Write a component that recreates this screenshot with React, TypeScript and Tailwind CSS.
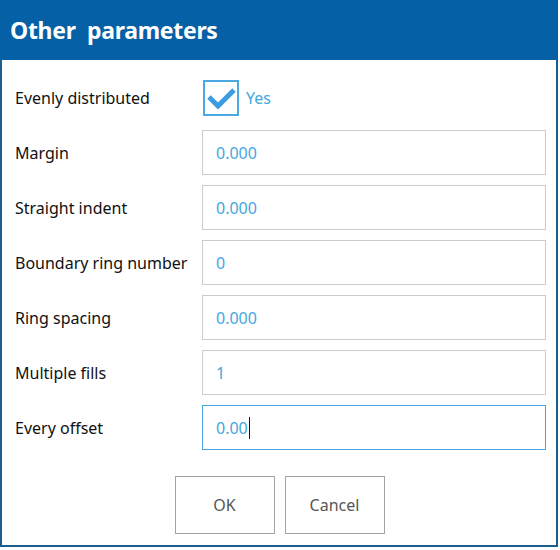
import React from "react";

const rows: { label: string; value: string; focus?: boolean }[] = [
  { label: "Margin", value: "0.000" },
  { label: "Straight indent", value: "0.000" },
  { label: "Boundary ring number", value: "0" },
  { label: "Ring spacing", value: "0.000" },
  { label: "Multiple fills", value: "1" },
  { label: "Every offset", value: "0.00", focus: true },
];

export default function App() {
  return (
    <div
      className="w-[560px] h-[550px] bg-white relative overflow-hidden"
      style={{ fontFamily: '"Noto Sans", "Open Sans", sans-serif' }}
    >
      <div className="w-[558px] h-[547px] border-2 border-t-0 border-[#1b5f8f] bg-white flex flex-col">
        <div className="h-[60px] bg-[#0660a6] flex items-center pl-[10px] -mx-[2px]">
          <span className="text-white text-[23px] font-bold whitespace-pre leading-none tracking-[-0.3px]">
            Other  parameters
          </span>
        </div>
        <div className="flex flex-col gap-[10px] pt-[15px] pl-[13px]">
          <div className="flex items-center h-[45px]">
            <div className="w-[188px] text-[16px] text-[#111]">Evenly distributed</div>
            <div className="w-[36px] h-[36px] border-2 border-[#4aa8e2] flex items-center justify-center">
              <svg width="36" height="36" viewBox="0 0 36 36" className="-m-[2px]">
                <path d="M6 17 L15 26 L31 10" fill="none" stroke="#3a9de0" strokeWidth="5" strokeLinecap="butt" strokeLinejoin="miter" />
              </svg>
            </div>
            <span className="ml-[7px] text-[16px] text-[#45a6e0]">Yes</span>
          </div>
          {rows.map((r) => (
            <div key={r.label} className="flex items-center h-[45px]">
              <div className="w-[187px] text-[16px] text-[#111]">{r.label}</div>
              <div
                className={`w-[344px] h-[45px] border flex items-center pl-[13px] bg-white ${
                  r.focus ? "border-[#45a6e0]" : "border-[#cccccc]"
                }`}
              >
                <span className="text-[16px] text-[#45a6e0]">{r.value}</span>
                {r.focus && <span className="w-px h-[22px] bg-[#111] ml-[1px]" />}
              </div>
            </div>
          ))}
        </div>
        <div className="flex justify-center gap-[10px] mt-[26px] pl-[1px]">
          <button className="w-[100px] h-[58px] border border-[#a3a3a3] bg-white text-[16px] text-[#555]">
            OK
          </button>
          <button className="w-[100px] h-[58px] border border-[#a3a3a3] bg-white text-[16px] text-[#555]">
            Cancel
          </button>
        </div>
      </div>
    </div>
  );
}
